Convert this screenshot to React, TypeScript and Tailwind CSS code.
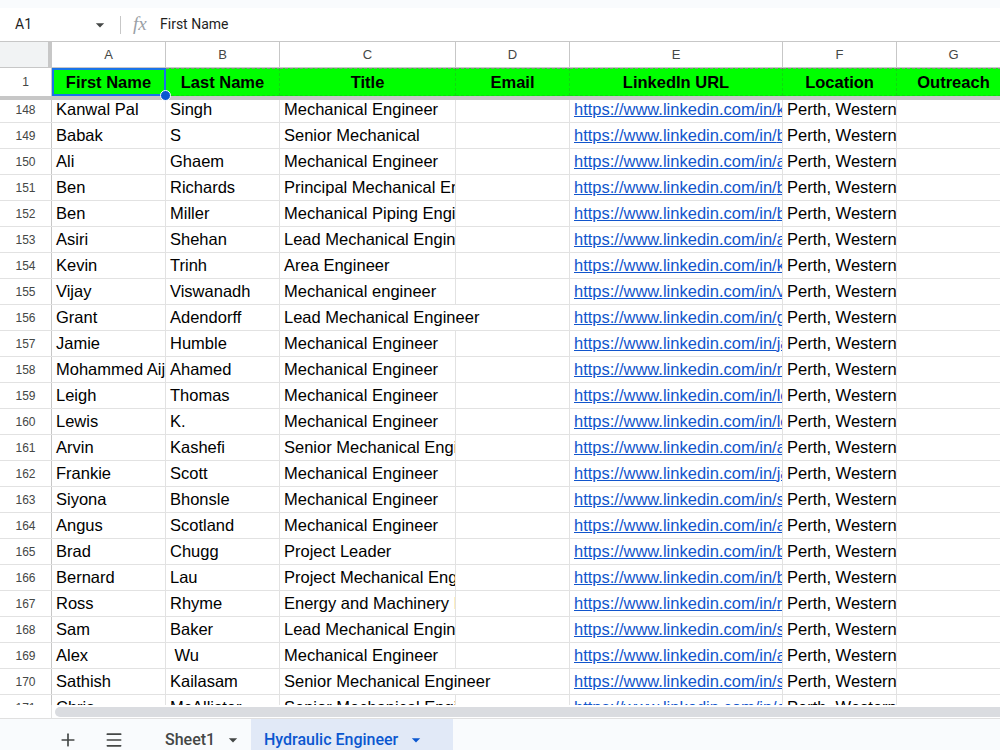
import { Plus, Menu } from 'lucide-react';

const colW = ['w-[114px]', 'w-[114px]', 'w-[176px]', 'w-[114px]', 'w-[213px]', 'w-[114px]', 'w-[114px]'];
const letters = ['A', 'B', 'C', 'D', 'E', 'F', 'G'];
const headers = ['First Name', 'Last Name', 'Title', 'Email', 'LinkedIn URL', 'Location', 'Outreach'];

// [row, first, last, title, slug, title overflows into D]
const rows: [number, string, string, string, string, boolean][] = [
  [148, 'Kanwal Pal', 'Singh', 'Mechanical Engineer', 'kanwal-pal-singh', false],
  [149, 'Babak', 'S', 'Senior Mechanical', 'babak-s-2a1b', false],
  [150, 'Ali', 'Ghaem', 'Mechanical Engineer', 'ali-ghaem', false],
  [151, 'Ben', 'Richards', 'Principal Mechanical Engineer', 'ben-richards', false],
  [152, 'Ben', 'Miller', 'Mechanical Piping Engineer', 'ben-miller', false],
  [153, 'Asiri', 'Shehan', 'Lead Mechanical Engineer', 'asiri-shehan', false],
  [154, 'Kevin', 'Trinh', 'Area Engineer', 'kevin-trinh', false],
  [155, 'Vijay', 'Viswanadh', 'Mechanical engineer', 'vijay-viswanadh', false],
  [156, 'Grant', 'Adendorff', 'Lead Mechanical Engineer', 'grant-adendorff', true],
  [157, 'Jamie', 'Humble', 'Mechanical Engineer', 'jamie-humble', false],
  [158, 'Mohammed Aijaz', 'Ahamed', 'Mechanical Engineer', 'mohammed-aijaz', false],
  [159, 'Leigh', 'Thomas', 'Mechanical Engineer', 'leigh-thomas', false],
  [160, 'Lewis', 'K.', 'Mechanical Engineer', 'lewis-k', false],
  [161, 'Arvin', 'Kashefi', 'Senior Mechanical Engineer', 'arvin-kashefi', false],
  [162, 'Frankie', 'Scott', 'Mechanical Engineer', 'jake-scott', false],
  [163, 'Siyona', 'Bhonsle', 'Mechanical Engineer', 'siyona-bhonsle', false],
  [164, 'Angus', 'Scotland', 'Mechanical Engineer', 'angus-scotland', false],
  [165, 'Brad', 'Chugg', 'Project Leader', 'brad-chugg', false],
  [166, 'Bernard', 'Lau', 'Project Mechanical Engineer', 'bernard-lau', false],
  [167, 'Ross', 'Rhyme', 'Energy and Machinery Engineer', 'ross-rhyme', false],
  [168, 'Sam', 'Baker', 'Lead Mechanical Engineer', 'sam-baker', false],
  [169, 'Alex', ' Wu', 'Mechanical Engineer', 'alex-wu', false],
  [170, 'Sathish', 'Kailasam', 'Senior Mechanical Engineer', 'sathish-kailasam', true],
  [171, 'Chris', 'McAllister', 'Senior Mechanical Engineer', 'chris-mcallister', false],
];

function Caret({ className }: { className?: string }) {
  return (
    <svg width="20" height="20" viewBox="0 0 24 24" className={className}>
      <path d="M7 10l5 5 5-5z" fill="currentColor" />
    </svg>
  );
}

export default function App() {
  return (
    <div className="w-[1000px] h-[750px] overflow-hidden bg-white flex flex-col font-['Liberation_Sans',Arial,sans-serif] text-black">
      {/* top strip */}
      <div className="h-[8px] shrink-0 bg-[#f9fbfd]" />

      {/* formula bar */}
      <div className="h-[34px] shrink-0 flex items-center border-b border-[#c7c7c7] font-['Roboto',sans-serif] text-[14px] text-[#1f1f1f]">
        <div className="w-[120px] flex items-center pl-[15px] pr-[10px]">
          <span className="flex-1">A1</span>
          <Caret className="text-[#444746]" />
        </div>
        <div className="w-px h-[18px] bg-[#c7c7c7]" />
        <span className="ml-[12px] w-[26px] font-['Liberation_Serif',serif] italic text-[19px] text-[#9aa0a6]">fx</span>
        <span className="ml-[1px]">First Name</span>
      </div>

      {/* column letters */}
      <div className="h-[26px] shrink-0 flex border-b border-[#c7c7c7] text-[13px] text-[#444746]">
        <div className="w-[52px] flex shrink-0 bg-[#f1f3f4]">
          <div className="flex-1" />
          <div className="w-[4px] bg-[#c7c7c7]" />
        </div>
        {letters.map((l, i) => (
          <div key={l} className={`${colW[i]} shrink-0 border-r border-[#c7c7c7] flex items-center justify-center`}>
            {l}
          </div>
        ))}
      </div>

      {/* frozen row 1 */}
      <div className="relative h-[28px] shrink-0 flex">
        <div className="w-[52px] shrink-0 border-r border-[#c7c7c7] flex items-center justify-center text-[12px] text-[#444746]">1</div>
        {headers.map((h, i) => (
          <div
            key={h}
            className={`${colW[i]} shrink-0 bg-[#00ff00] border-r border-b border-[#10d810] flex items-center justify-center font-bold text-[16.5px] whitespace-nowrap overflow-hidden ${i > 0 ? 'border-t border-t-[#8a8a8a] border-dashed' : 'border-t border-t-[#00ff00]'}`}
          >
            {h}
          </div>
        ))}
        {/* A1 selection */}
        <div className="absolute left-[52px] top-0 w-[114px] h-[28px] border-2 border-[#1a73e8] pointer-events-none" />
        <div className="absolute left-[160px] top-[22px] w-[11px] h-[11px] rounded-full bg-[#0b57d0] border border-white" />
      </div>

      {/* frozen divider */}
      <div className="h-[4px] shrink-0 bg-[#c7c7c7]" />

      {/* scrolled rows */}
      <div className="h-[605px] shrink-0 overflow-hidden">
        <div className="-mt-[3px]">
          {rows.map(([n, first, last, title, slug, spill]) => (
            <div key={n} className="h-[26px] flex border-b border-[#e2e2e2] text-[16.5px]">
              <div className="w-[52px] shrink-0 border-r border-[#c7c7c7] flex items-center justify-center text-[12px] text-[#444746]">
                {n}
              </div>
              <div className={`${colW[0]} shrink-0 border-r border-[#e2e2e2] pl-[4px] flex items-center whitespace-pre overflow-hidden`}>{first}</div>
              <div className={`${colW[1]} shrink-0 border-r border-[#e2e2e2] pl-[4px] flex items-center whitespace-pre overflow-hidden`}>{last}</div>
              <div
                className={`${colW[2]} shrink-0 pl-[4px] flex items-center whitespace-pre ${spill ? 'overflow-visible border-r border-r-transparent' : 'overflow-hidden border-r border-[#e2e2e2]'}`}
              >
                {title}
              </div>
              <div className={`${colW[3]} shrink-0 border-r border-[#e2e2e2]`} />
              <div className={`${colW[4]} shrink-0 border-r border-[#e2e2e2] pl-[4px] flex items-center whitespace-pre overflow-hidden`}>
                <span className="text-[#1155cc] underline">https://www.linkedin.com/in/{slug}</span>
              </div>
              <div className={`${colW[5]} shrink-0 border-r border-[#e2e2e2] pl-[4px] flex items-center whitespace-pre overflow-hidden`}>
                Perth, Western Australia, Australia
              </div>
              <div className={`${colW[6]} shrink-0`} />
            </div>
          ))}
        </div>
      </div>

      {/* horizontal scrollbar */}
      <div className="h-[14px] shrink-0 flex border-b border-[#e0e0e0]">
        <div className="w-[52px] shrink-0 border-r border-[#e2e2e2]" />
        <div className="flex-1 flex items-center pl-[3px]">
          <div className="h-[10px] flex-1 bg-[#dadce0] rounded-l-[5px]" />
        </div>
      </div>

      {/* sheet tabs */}
      <div className="h-[42px] shrink-0 bg-[#f9fbfd] flex items-stretch font-['Roboto',sans-serif] text-[16px] font-medium">
        <div className="w-[136px] flex items-center pl-[58px] gap-[26px] text-[#444746]">
          <Plus size={20} strokeWidth={2} />
          <Menu size={20} strokeWidth={2} />
        </div>
        <div className="w-[115px] flex items-center pl-[29px] text-[#444746]">
          <span>Sheet1</span>
          <Caret className="ml-[8px]" />
        </div>
        <div className="w-[202px] flex items-center pl-[13px] bg-[#e1e9f7] text-[#0b57d0]">
          <span>Hydraulic Engineer</span>
          <Caret className="ml-[8px]" />
        </div>
      </div>
    </div>
  );
}
